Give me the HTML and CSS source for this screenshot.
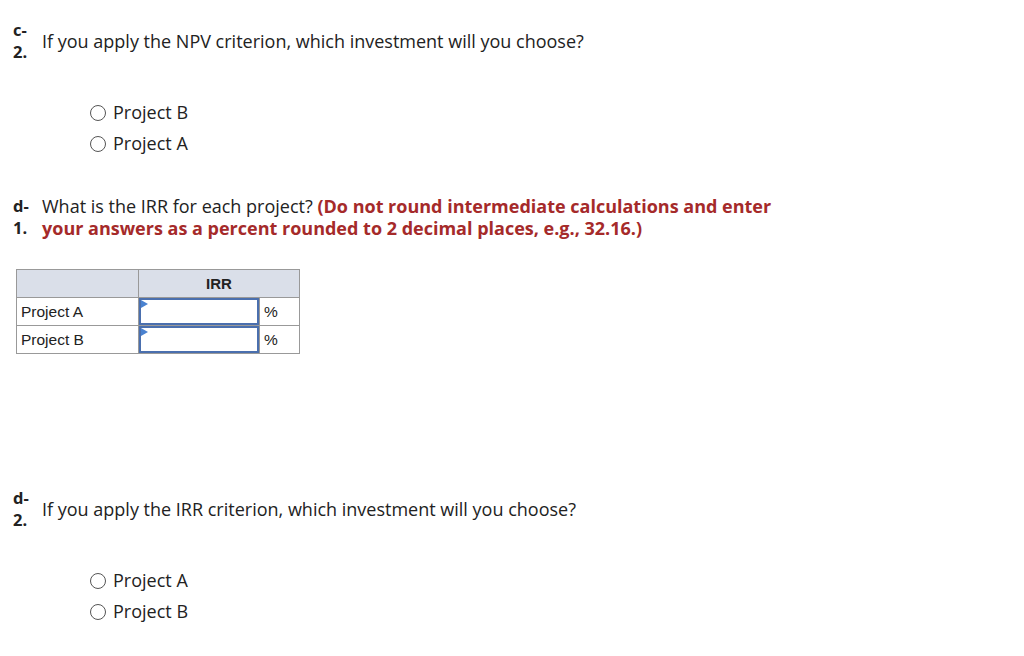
FILE: index.html
```html
<!DOCTYPE html>
<html>
<head>
<meta charset="utf-8">
<link rel="stylesheet" href="styles.css">
</head>
<body>
<div class="page">
  <section class="q q-c2">
    <div class="qhead center">
      <div class="label">c-<br>2.</div>
      <div class="qtext">If you apply the NPV criterion, which investment will you choose?</div>
    </div>
    <div class="options">
      <label class="opt"><span class="radio"></span>Project B</label>
      <label class="opt"><span class="radio"></span>Project A</label>
    </div>
  </section>

  <section class="q q-d1">
    <div class="qhead">
      <div class="label">d-<br>1.</div>
      <div class="qtext">What is the IRR for each project? <span class="red">(Do not round intermediate calculations and enter your answers as a percent rounded to 2 decimal places, e.g., 32.16.)</span></div>
    </div>
    <table class="irr">
      <tr class="hdr"><th class="c1"></th><th colspan="2">IRR</th></tr>
      <tr><td class="c1">Project A</td><td class="c2"><div class="inp"></div></td><td class="c3">%</td></tr>
      <tr><td class="c1">Project B</td><td class="c2"><div class="inp"></div></td><td class="c3">%</td></tr>
    </table>
  </section>

  <section class="q q-d2">
    <div class="qhead center">
      <div class="label">d-<br>2.</div>
      <div class="qtext">If you apply the IRR criterion, which investment will you choose?</div>
    </div>
    <div class="options">
      <label class="opt"><span class="radio"></span>Project A</label>
      <label class="opt"><span class="radio"></span>Project B</label>
    </div>
  </section>
</div>
</body>
</html>
```
FILE: styles.css
```css
html, body { margin: 0; padding: 0; background: #fff; }
body {
  font-family: "Open Sans", "Liberation Sans", sans-serif;
  color: #222;
}
.page { padding: 19px 0 0 13px; }
.qhead { display: flex; align-items: flex-start; }
.qhead.center { align-items: center; }
.label {
  width: 29px;
  flex: none;
  font-weight: 700;
  font-size: 16.5px;
  line-height: 22px;
}
.qtext {
  font-size: 18px;
  line-height: 22px;
  width: 740px;
}
.red { color: #a52a2a; font-weight: 700; }
.options { padding: 39px 0 0 77px; display: flex; flex-direction: column; gap: 10px; }
.opt { display: flex; align-items: center; font-size: 18px; line-height: 21px; }
.radio {
  width: 16px; height: 16px; border: 1px solid #555; border-radius: 50%;
  margin-right: 7px; box-sizing: border-box;
}
.q-d1 { margin-top: 41px; }
.irr {
  margin: 30px 0 0 3px;
  border-collapse: collapse;
  font-family: "Liberation Sans", Arial, sans-serif;
  font-size: 15.5px;
}
.irr th, .irr td { border: 1px solid #999; height: 27px; padding: 0; }
.irr th { background: #dadfe9; font-weight: 700; font-size: 15px; }
.irr .c1 { width: 117px; padding-left: 4px; text-align: left; }
.irr .c2 { width: 120px; padding: 0; }
.irr .c3 { width: 35px; padding-left: 4px; }
.inp {
  height: 27px; box-sizing: border-box;
  border: 2px solid #4a6fae; position: relative;
}
.inp::before {
  content: ""; position: absolute; left: 0; top: 0;
  border-left: 7px solid #4a82d0; border-top: 4px solid transparent; border-bottom: 4px solid transparent;
}
.q-d2 { margin-top: 133px; }
```
